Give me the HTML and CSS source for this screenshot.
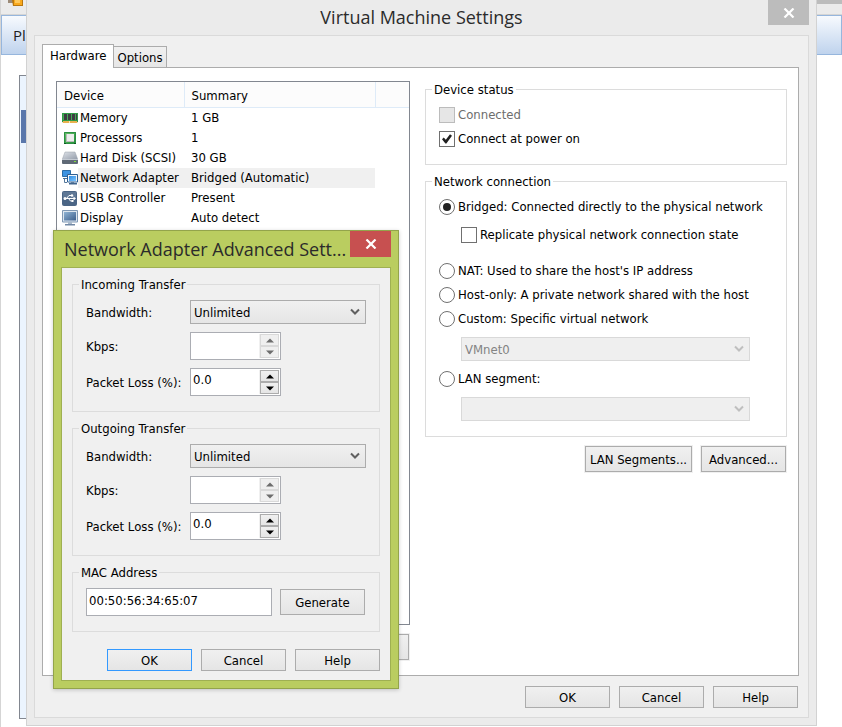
FILE: index.html
```html
<!DOCTYPE html>
<html lang="en">
<head>
<meta charset="utf-8">
<meta name="viewport" content="width=device-width, initial-scale=1">
<title>Virtual Machine Settings</title>
<link rel="stylesheet" href="styles.css">
</head>
<body>
<svg class="defs" aria-hidden="true">
  <defs>
    <linearGradient id="g-green" x1="0" y1="0" x2="1" y2="1"><stop offset="0" stop-color="#6cc36c"/><stop offset="1" stop-color="#1d8a35"/></linearGradient>
    <linearGradient id="g-steel" x1="0" y1="0" x2="1" y2="1"><stop offset="0" stop-color="#dfe3e9"/><stop offset="1" stop-color="#8f98a6"/></linearGradient>
    <linearGradient id="g-screen" x1="0" y1="0" x2="1" y2="1"><stop offset="0" stop-color="#8fb3d4"/><stop offset="1" stop-color="#3d5f8c"/></linearGradient>
    <linearGradient id="g-blue" x1="0" y1="0" x2="1" y2="1"><stop offset="0" stop-color="#2f8ae0"/><stop offset="1" stop-color="#7cc6ff"/></linearGradient>
    <symbol id="chevron" viewBox="0 0 10 8"><path d="M1 1.5 5 5.5 9 1.5" fill="none" stroke="currentColor" stroke-width="2"/></symbol>
    <symbol id="cross" viewBox="0 0 12 10"><path d="M1.500 .5 10.500 9.500M10.500 .5 1.500 9.500" fill="none" stroke="currentColor" stroke-width="2.200"/></symbol>
    <symbol id="up" viewBox="0 0 8 5"><path d="M0 4.5 4 .5 8 4.5z" fill="currentColor"/></symbol>
    <symbol id="down" viewBox="0 0 8 5"><path d="M0 .5 4 4.5 8 .5z" fill="currentColor"/></symbol>
  </defs>
</svg>

<div class="host">
  <div class="host-title">
    <svg class="host-icon" viewBox="0 0 16 7" aria-hidden="true"><path d="M0 0h7v3H0z" fill="#9b8a78"/><path d="M4 0h11v6H5z" fill="#b9770f"/><path d="M6 0h8v5H6z" fill="#f9a91c"/><path d="M7 0h5v3H7z" fill="#ffc95c"/></svg>
    <span class="host-caption"></span>
  </div>
  <div class="host-bar">Player</div>
  <div class="host-body"><div class="host-tree"><div class="host-selected"></div></div></div>
</div>

<section class="dialog settings" aria-label="Virtual Machine Settings">
  <header class="settings-title">
    <h1>Virtual Machine Settings</h1>
    <button class="close" aria-label="Close"><svg><use href="#cross"/></svg></button>
  </header>
  <div class="client settings-client">
    <nav class="tabs">
      <button class="tab active">Hardware</button>
      <button class="tab">Options</button>
    </nav>
    <div class="panel">
      <div class="devices">
        <div class="list">
          <table>
            <thead><tr><th class="col-device">Device</th><th class="col-summary">Summary</th><th></th></tr></thead>
            <tbody>
              <tr><td><span class="device"><svg viewBox="0 0 16 16"><path d="M0 3h16v10H0z" fill="#2f9a45"/><path d="M1 4h14v6H1z" fill="#46a857"/><path d="M2 4h3v6H2zM6 4h3v6H6zM10 4h3v6h-3z" fill="#3d3d42"/><path d="M14 4h1v6h-1z" fill="#3d3d42"/><path d="M1 11h14v2H1z" fill="#e9b24f"/><path d="M0 12h1v1H0zM7 11h1v2H7zM15 12h1v1h-1z" fill="#f6e6c4"/></svg><span>Memory</span></span></td><td>1 GB</td><td></td></tr>
              <tr><td><span class="device"><svg viewBox="0 0 16 16"><path d="M2 2h12v12H2z" fill="url(#g-green)"/><path d="M2.500 2.500h11v11h-11z" fill="none" stroke="#2b8f42"/><path d="M4 4h8v8H4z" fill="#b9b9b9"/><path d="M5 4h7v7H5z" fill="#ececec"/><path d="M2 13h2v1H2zM12 13h2v1h-2z" fill="#0d5a22"/></svg><span>Processors</span></span></td><td>1</td><td></td></tr>
              <tr><td><span class="device"><svg viewBox="0 0 16 16"><path d="M3 2h10l3 8H0z" fill="url(#g-steel)" stroke="#9aa1ab" stroke-width=".5"/><path d="M0 9h16v4q0 1-1 1H1q-1 0-1-1z" fill="#5f6976"/><path d="M0 9h16v1H0z" fill="#c4cad2"/><path d="M12 11h2v1h-2z" fill="#7de03c"/></svg><span>Hard Disk (SCSI)</span></span></td><td>30 GB</td><td></td></tr>
              <tr class="selected"><td><span class="device"><svg viewBox="0 0 16 16"><path d="M.5 .5h8v6h-8z" fill="#3c93e2" stroke="#2a6da8"/><path d="M1 8h6v1H1z" fill="#44709b"/><path d="M2.500 9v3.500H5" fill="none" stroke="#54789b"/><path d="M5.500 4.500h10v7.500h-10z" fill="#f0f6fc" stroke="#2f5f92"/><path d="M7 6h7v5H7z" fill="url(#g-blue)"/><path d="M9 12h3v1H9z" fill="#5c7c9e"/><path d="M7 13h8v1.500H7z" fill="#40658d"/></svg><span>Network Adapter</span></span></td><td>Bridged (Automatic)</td><td></td></tr>
              <tr><td><span class="device"><svg viewBox="0 0 16 16"><rect x="0" y="1" width="15" height="15" rx="2" fill="#4b6585"/><path d="M1 2h13v6H1z" fill="#5f7896"/><path d="M2 8.500h10" stroke="#fff" fill="none"/><path d="M4.500 8.500 7 5.500h2.500M6.500 8.500 8.500 11h2" fill="none" stroke="#fff"/><circle cx="3" cy="8.500" r="1.500" fill="#fff"/><path d="M11.500 6.500 14 8.500 11.500 10.500z" fill="#fff"/><circle cx="10" cy="5.500" r="1.200" fill="#fff"/><path d="M9.500 10h2v2h-2z" fill="#fff"/></svg><span>USB Controller</span></span></td><td>Present</td><td></td></tr>
              <tr><td><span class="device"><svg viewBox="0 0 16 16"><path d="M.5 .5h15v11.500H.5z" fill="#dde6ef" stroke="#7f98b4"/><path d="M2 2h12v8.500H2z" fill="url(#g-screen)"/><path d="M6 12h4v2H6z" fill="#a9b9ca"/><path d="M3 14h10v1.500H3z" fill="#7188a5"/></svg><span>Display</span></span></td><td>Auto detect</td><td></td></tr>
            </tbody>
          </table>
        </div>
        <div class="list-actions"><button class="btn lifted" aria-label="Remove"></button></div>
      </div>

      <div class="details">
        <fieldset class="status">
          <legend>Device status</legend>
          <div class="choices">
            <label class="choice off"><input type="checkbox" disabled><span>Connected</span></label>
            <label class="choice"><input type="checkbox" checked><span>Connect at power on</span></label>
          </div>
        </fieldset>
        <fieldset>
          <legend>Network connection</legend>
          <div class="choices bridged">
            <label class="choice"><input type="radio" name="net" checked><span>Bridged: Connected directly to the physical network</span></label>
            <label class="choice nested"><input type="checkbox"><span>Replicate physical network connection state</span></label>
          </div>
          <div class="choices">
            <label class="choice"><input type="radio" name="net"><span>NAT: Used to share the host's IP address</span></label>
            <label class="choice"><input type="radio" name="net"><span>Host-only: A private network shared with the host</span></label>
            <label class="choice"><input type="radio" name="net"><span>Custom: Specific virtual network</span></label>
          </div>
          <div class="select nested"><select aria-label="Virtual network" disabled><option>VMnet0</option></select><svg><use href="#chevron"/></svg></div>
          <label class="choice"><input type="radio" name="net"><span>LAN segment:</span></label>
          <div class="select nested"><select aria-label="LAN segment" disabled><option></option></select><svg><use href="#chevron"/></svg></div>
        </fieldset>
        <div class="actions">
          <button class="btn lifted wide">LAN Segments...</button>
          <button class="btn lifted">Advanced...</button>
        </div>
      </div>
    </div>
    <footer class="actions">
      <button class="btn">OK</button>
      <button class="btn">Cancel</button>
      <button class="btn">Help</button>
    </footer>
  </div>
</section>

<section class="dialog advanced" aria-label="Network Adapter Advanced Settings">
  <header class="advanced-title">
    <h2>Network Adapter Advanced Sett...</h2>
    <button class="close" aria-label="Close"><svg><use href="#cross"/></svg></button>
  </header>
  <div class="client advanced-client">
    <fieldset>
      <legend>Incoming Transfer</legend>
      <div class="form">
        <label for="in-bw">Bandwidth:</label>
        <div class="select"><select id="in-bw"><option>Unlimited</option></select><svg><use href="#chevron"/></svg></div>
        <label for="in-kbps">Kbps:</label>
        <div class="spin"><input id="in-kbps" type="text" disabled><div class="steps"><button disabled aria-label="Increase"><svg><use href="#up"/></svg></button><button disabled aria-label="Decrease"><svg><use href="#down"/></svg></button></div></div>
        <label for="in-loss">Packet Loss (%):</label>
        <div class="spin"><input id="in-loss" type="text" value="0.0"><div class="steps"><button aria-label="Increase"><svg><use href="#up"/></svg></button><button aria-label="Decrease"><svg><use href="#down"/></svg></button></div></div>
      </div>
    </fieldset>
    <fieldset>
      <legend>Outgoing Transfer</legend>
      <div class="form">
        <label for="out-bw">Bandwidth:</label>
        <div class="select"><select id="out-bw"><option>Unlimited</option></select><svg><use href="#chevron"/></svg></div>
        <label for="out-kbps">Kbps:</label>
        <div class="spin"><input id="out-kbps" type="text" disabled><div class="steps"><button disabled aria-label="Increase"><svg><use href="#up"/></svg></button><button disabled aria-label="Decrease"><svg><use href="#down"/></svg></button></div></div>
        <label for="out-loss">Packet Loss (%):</label>
        <div class="spin"><input id="out-loss" type="text" value="0.0"><div class="steps"><button aria-label="Increase"><svg><use href="#up"/></svg></button><button aria-label="Decrease"><svg><use href="#down"/></svg></button></div></div>
      </div>
    </fieldset>
    <fieldset>
      <legend>MAC Address</legend>
      <div class="mac">
        <input type="text" aria-label="MAC Address" value="00:50:56:34:65:07">
        <button class="btn tall">Generate</button>
      </div>
    </fieldset>
    <footer class="actions">
      <button class="btn default">OK</button>
      <button class="btn">Cancel</button>
      <button class="btn">Help</button>
    </footer>
  </div>
</section>
</body>
</html>
```
FILE: styles.css
```css
* { box-sizing: border-box; }

body {
  margin: 0;
  font: 13px/16px "DejaVu Sans Condensed", "DejaVu Sans", sans-serif;
  color: #000;
  background: #fff;
  overflow: hidden;
}

button, input, select {
  font: inherit;
  color: inherit;
  border-radius: 0;
}

h1, h2 {
  margin: 0;
  font: 18px/26px "Open Sans", sans-serif;
  color: #2b2b2b;
  white-space: nowrap;
}

.defs { position: absolute; width: 0; height: 0; }

/* Window in the background */
.host {
  min-height: 100vh;
  display: flex;
  flex-direction: column;
  border-left: 1px solid #d5d5d5;
}

.host-title {
  display: flex;
  justify-content: space-between;
  height: 15px;
  padding-left: 7px;
  background: #ebebeb;
  border-bottom: 1px solid #d5d5d5;
}

.host-icon { display: block; width: 16px; height: 7px; }
.host-caption { width: 60px; height: 4px; background: #bcbcbc; }

.host-bar {
  height: 40px;
  padding: 0 11px;
  border: 1px solid #96b6dd;
  background: linear-gradient(#f7fafe, #bfd3ed);
  font: 15px/38px "Open Sans", sans-serif;
  color: #1e1e1e;
}

.host-body {
  flex: 1;
  display: flex;
  padding: 20px 0 8px 18px;
}

.host-tree {
  width: 200px;
  padding: 34px 0 0 1px;
  border: 1px solid #828790;
  background: #ebf4fe;
}

.host-selected { height: 33px; background: #5a77ab; }

/* Dialog frames */
.dialog { position: absolute; display: flex; flex-direction: column; }

.client { display: flex; flex-direction: column; background: #f0f0f0; }

.close {
  flex: none;
  width: 41px;
  height: 25px;
  padding: 0;
  border: 0;
  display: grid;
  place-items: center;
  color: #fff;
  background: #bcbcbc;
}

.close svg { width: 12px; height: 10px; }

.settings {
  inset: 0 25px 1px 26px;
  padding: 0 7px 7px;
  border: 1px solid #d2d2d2;
  border-top: 0;
  background: #ebebeb;
}

.settings-title {
  height: 35px;
  display: grid;
  grid-template-columns: 41px 1fr 41px;
}

.settings-title h1 {
  grid-column: 2;
  text-align: center;
  padding-top: 4px;
}

.settings-client {
  flex: 1;
  padding: 8px 9px 9px 7px;
  border: 1px solid #dadada;
}

.tabs { display: flex; align-items: flex-end; height: 24px; }

.tab {
  height: 22px;
  padding: 1px 3px 0;
  border: 1px solid #acacac;
  border-left: 0;
  background: linear-gradient(#f0f0f0, #e6e6e6);
}

.tab.active {
  height: 24px;
  padding: 0 7px 2px;
  border: 1px solid #acacac;
  border-bottom: 0;
  background: #fff;
  z-index: 1;
}

.panel {
  flex: 1;
  display: grid;
  grid-template-columns: 354px minmax(0, 1fr);
  column-gap: 15px;
  margin-top: -1px;
  padding: 13px 11px 15px 13px;
  border: 1px solid #acacac;
  background: #fff;
}

/* Device list */
.devices { display: flex; flex-direction: column; }

.list { flex: 1; border: 1px solid #828790; }

.list table {
  width: 100%;
  border-collapse: collapse;
  table-layout: fixed;
}

.list th {
  height: 25px;
  padding: 3px 7px 0;
  border-right: 1px solid #deebf8;
  border-bottom: 1px solid #deebf8;
  background: #fcfcfc;
  font-weight: normal;
  text-align: left;
}

.list th:last-child { border-right: 0; }
.col-device { width: 127px; }
.col-summary { width: 191px; }

.list td {
  height: 20px;
  padding: 0 7px;
  white-space: nowrap;
}

.list td:first-child { padding: 0 0 0 5px; }

.device { display: flex; align-items: center; }
.device svg { flex: none; width: 16px; height: 16px; }
.device span { flex: 1; line-height: 20px; padding-left: 2px; }
.selected .device span,
.selected td:nth-child(2) { background: #f0f0f0; }

.list-actions { display: flex; justify-content: flex-end; padding: 9px 1px 0 0; }

/* Group boxes */
fieldset {
  min-width: 0;
  margin: 0 0 8px;
  padding: 10px 36px 15px 13px;
  border: 1px solid #dcdcdc;
}

.status { padding-bottom: 17px; }

legend { height: 16px; margin-left: -7px; padding: 1px 2px 0; }

.choices { display: flex; flex-direction: column; gap: 8px; }
.bridged { gap: 12px; margin-bottom: 20px; }
.nested { margin-left: 22px; }

.choice {
  display: flex;
  align-items: center;
  gap: 3px;
  white-space: nowrap;
}

.choice.off { color: #6d6d6d; }

.choice input {
  appearance: none;
  flex: none;
  display: grid;
  place-items: center;
  width: 16px;
  height: 16px;
  margin: 0;
  border: 1px solid #707070;
  background: #fff;
}

.choice input:disabled { border-color: #bcbcbc; background: #e6e6e6; }
.choice input[type="radio"] { border-radius: 50%; }

.choice input[type="radio"]:checked::before {
  content: "";
  width: 8px;
  height: 8px;
  border-radius: 50%;
  background: #212121;
}

.choice input[type="checkbox"]:checked::before {
  content: "";
  width: 10px;
  height: 10px;
  background: #212121;
  clip-path: polygon(0 52%, 18% 34%, 38% 58%, 80% 2%, 100% 18%, 44% 96%, 34% 96%);
}

/* Drop-downs */
.select { display: grid; align-items: center; }
.select select, .select svg { grid-area: 1 / 1; }

.select select {
  appearance: none;
  width: 100%;
  height: 24px;
  padding: 1px 3px 0;
  border: 1px solid #acacac;
  background: linear-gradient(#f0f0f0, #e5e5e5);
}

.select svg {
  justify-self: end;
  width: 10px;
  height: 8px;
  margin-right: 6px;
  color: #606060;
  pointer-events: none;
}

.select select:disabled {
  border-color: #d9d9d9;
  background: #efefef;
  color: #838383;
  opacity: 1;
}

.select select:disabled + svg { color: #bfbfbf; }
.details .select { margin-top: 10px; }
.details .select + .choice { margin-top: 10px; }

/* Buttons */
.actions { display: flex; justify-content: flex-end; gap: 9px; }

.btn {
  width: 85px;
  height: 22px;
  padding: 1px 0 0;
  border: 1px solid #acacac;
  background: linear-gradient(#f0f0f0, #e5e5e5);
  white-space: nowrap;
}

.btn.tall, .btn.lifted { height: 26px; }
.btn.lifted { box-shadow: 0 0 0 1px #f0f0f0; }
.btn.wide { width: 107px; }
.btn.default { border-color: #3399ff; }

.details .actions { padding: 1px 1px 0 0; }
.settings-client > .actions { padding: 10px 1px 0 0; }

/* Advanced settings dialog */
.advanced {
  left: 53px;
  top: 230px;
  width: 346px;
  padding: 0 7px 7px;
  border: 1px solid #93a44b;
  background: #bacd60;
  box-shadow: 0 1px 4px rgba(0, 0, 0, .2);
}

.advanced-title {
  display: flex;
  justify-content: space-between;
  height: 36px;
}

.advanced-title h2 { min-width: 0; padding: 5px 0 0 3px; }
.advanced-title .close { height: 26px; background: #c75050; }

.advanced-client { padding: 8px 10px 9px; border: 1px solid #9fb052; }
.advanced-client fieldset { padding-top: 8px; padding-right: 13px; }
.advanced-client > .actions { padding-top: 9px; }

.form {
  display: grid;
  grid-template-columns: 104px minmax(0, 1fr);
  align-items: center;
  row-gap: 8px;
}

.form label { padding-top: 2px; }

.spin {
  display: flex;
  width: 91px;
  height: 28px;
  padding: 1px;
  border: 1px solid #abadb3;
  background: #fff;
}

.spin input {
  flex: 1;
  min-width: 0;
  padding: 0 1px 4px;
  border: 0;
  background: #fff;
}

.steps {
  display: flex;
  flex-direction: column;
  width: 20px;
  padding-left: 1px;
  background: #f0f0f0;
}

.steps button {
  flex: 1;
  display: grid;
  place-items: center;
  padding: 0;
  border: 1px solid #acacac;
  background: linear-gradient(#f0f0f0, #e5e5e5);
}

.steps button:disabled { border-color: #d9d9d9; background: #efefef; color: #6d6d6d; }
.steps svg { width: 8px; height: 5px; }

.mac { display: flex; align-items: center; gap: 8px; padding-right: 1px; }

.mac input {
  flex: 1;
  min-width: 0;
  height: 28px;
  padding: 0 2px 4px;
  border: 1px solid #abadb3;
  background: #fff;
}
```
